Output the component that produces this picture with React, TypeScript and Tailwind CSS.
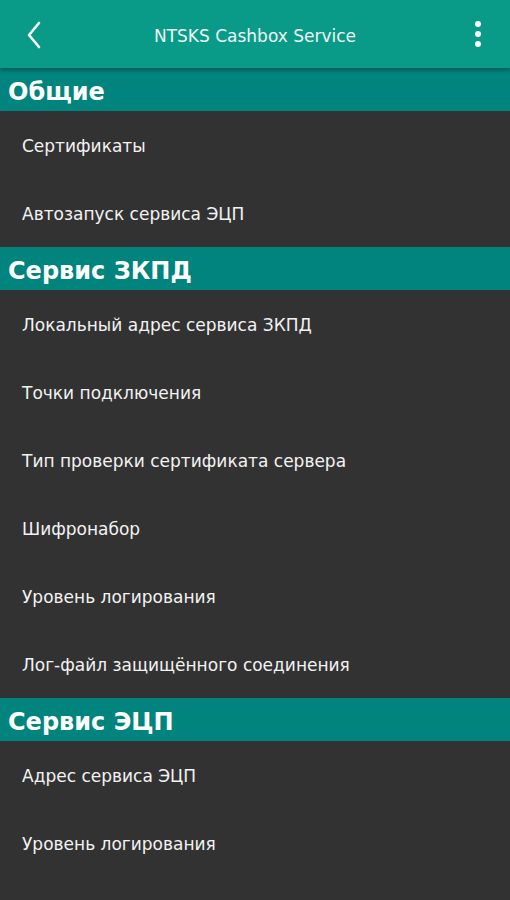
const sections = [
  { title: 'Общие', items: ['Сертификаты', 'Автозапуск сервиса ЭЦП'] },
  {
    title: 'Сервис ЗКПД',
    items: [
      'Локальный адрес сервиса ЗКПД',
      'Точки подключения',
      'Тип проверки сертификата сервера',
      'Шифронабор',
      'Уровень логирования',
      'Лог-файл защищённого соединения'
    ]
  },
  { title: 'Сервис ЭЦП', items: ['Адрес сервиса ЭЦП', 'Уровень логирования'] }
]

export default function App() {
  return (
    <div className="flex h-[900px] w-[510px] flex-col overflow-hidden bg-[#323232] font-['DejaVu_Sans',sans-serif] text-white">
      <div className="relative z-10 flex h-[68px] shrink-0 items-center bg-[#0a9a88] shadow-[0_2px_4px_rgba(0,0,0,0.35)]">
        <div className="flex w-[68px] items-center justify-center pt-[2px]">
          <svg width="20" height="28" viewBox="0 0 20 28" fill="none">
            <path d="M15 2 L5 14 L15 26" stroke="white" strokeWidth="2.6" strokeLinecap="round" strokeLinejoin="round" />
          </svg>
        </div>
        <div className="flex-1 pt-[6px] text-center text-[17px] text-[#eef7f5]">NTSKS Cashbox Service</div>
        <div className="flex w-[68px] flex-col items-center justify-center gap-[4px] pl-[4px]">
          <span className="h-[6px] w-[6px] rounded-full bg-white" />
          <span className="h-[6px] w-[6px] rounded-full bg-white" />
          <span className="h-[6px] w-[6px] rounded-full bg-white" />
        </div>
      </div>
      {sections.map((s) => (
        <div key={s.title} className="flex flex-col">
          <div className="flex h-[43px] items-center bg-[#01847e] pl-[8px] pt-[5px] text-[24px] font-bold">{s.title}</div>
          {s.items.map((item, i) => (
            <div key={i} className="flex h-[68px] items-center pl-[22px] pt-[4px] text-[17px] text-[#f2f2f2]">
              {item}
            </div>
          ))}
        </div>
      ))}
    </div>
  )
}
